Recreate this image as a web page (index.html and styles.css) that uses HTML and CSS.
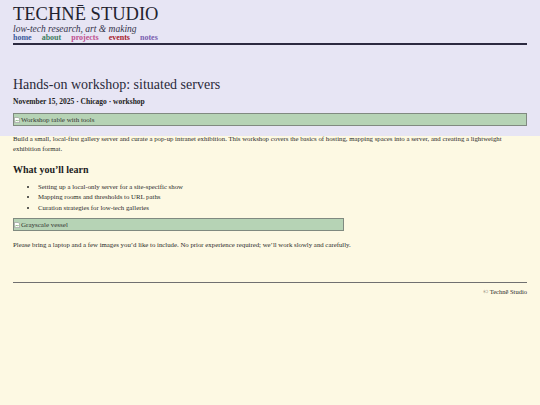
FILE: index.html
```html
<!DOCTYPE html>
<html lang="en">
<head>
    <meta charset="UTF-8">
    <meta name="viewport" content="width=device-width, initial-scale=1.0">
    <title>Technē Studio</title>
    <link rel="stylesheet" href="styles.css">
</head>
<body>
    <div class="top">
        <header class="site-head">
            <div class="brand">TECHNĒ STUDIO</div>
            <div class="tagline">low-tech research, art &amp; making</div>
            <nav class="nav">
                <a href="#" class="home">home</a>
                <a href="#" class="about">about</a>
                <a href="#" class="projects">projects</a>
                <a href="#" class="events">events</a>
                <a href="#" class="notes">notes</a>
            </nav>
        </header>
        <h1>Hands-on workshop: situated servers</h1>
        <p class="meta">November 15, 2025 · Chicago · workshop</p>
        <div class="pic"><svg class="broken" viewBox="0 0 8 8"><path d="M0.5 0.5h5l2 2v5h-7z" fill="#fff" stroke="#999"/><path d="M1.5 6l2-2 1.5 1.5 1-1" fill="none" stroke="#5a9a4a"/></svg>Workshop table with tools</div>
    </div>
    <div class="content">
        <p>Build a small, local-first gallery server and curate a pop-up intranet exhibition. This workshop covers the basics of hosting, mapping spaces into a server, and creating a lightweight exhibition format.</p>
        <h2>What you’ll learn</h2>
        <ul>
            <li>Setting up a local-only server for a site-specific show</li>
            <li>Mapping rooms and thresholds to URL paths</li>
            <li>Curation strategies for low-tech galleries</li>
        </ul>
        <div class="pic small"><svg class="broken" viewBox="0 0 8 8"><path d="M0.5 0.5h5l2 2v5h-7z" fill="#fff" stroke="#999"/><path d="M1.5 6l2-2 1.5 1.5 1-1" fill="none" stroke="#5a9a4a"/></svg>Grayscale vessel</div>
        <p>Please bring a laptop and a few images you’d like to include. No prior experience required; we’ll work slowly and carefully.</p>
        <footer class="foot">© Technē Studio</footer>
    </div>
</body>
</html>
```

FILE: styles.css
```css
html { background: #fdf9e3; }
body { margin: 0; font-family: "Liberation Serif", "DejaVu Serif", serif; color: #2a2a2a; }
.top { background: #e7e5f4; padding: 4px 13px 10px; }
.site-head { border-bottom: 2px solid #2c2a40; padding-bottom: 1px; }
.brand { font-size: 18.5px; line-height: 20px; color: #22222e; }
.tagline { font-style: italic; font-size: 9.5px; line-height: 10px; color: #33334a; }
.nav { display: flex; gap: 10px; font-size: 8px; font-weight: bold; line-height: 8px; }
.nav a { text-decoration: none; }
.nav .home { color: #3a5a9a; }
.nav .about { color: #3f7f60; }
.nav .projects { color: #c0508f; }
.nav .events { color: #a8202c; }
.nav .notes { color: #7a5fb0; }
h1 { font-weight: normal; font-size: 14px; margin: 32px 0 0; line-height: 16px; color: #2a2a3a; }
.meta { font-size: 7.5px; font-weight: bold; margin: 4px 0 0; color: #222; }
.pic { display: flex; align-items: center; gap: 1px; height: 11px; background: #b6d3b5; border: 1px solid #808a80; font-size: 7px; color: #333; margin-top: 7px; }
.pic.small { width: 329px; }
.broken { width: 6px; height: 6px; }
.content { padding: 0 13px 20px; font-size: 6.8px; line-height: 10px; }
.content p { margin: -2px 0 0; }
h2 { font-size: 10px; line-height: 10.5px; margin: 11px 0 0; color: #1e1e1e; }
ul { margin: 6px 0 0; padding-left: 25px; }
li { line-height: 10.5px; }
.content .pic { margin-top: 5px; }
.content .pic + p { margin-top: 9px; }
.foot { border-top: 1.5px solid #707070; margin-top: 32px; padding-top: 4px; text-align: right; font-size: 6.5px; }
```
